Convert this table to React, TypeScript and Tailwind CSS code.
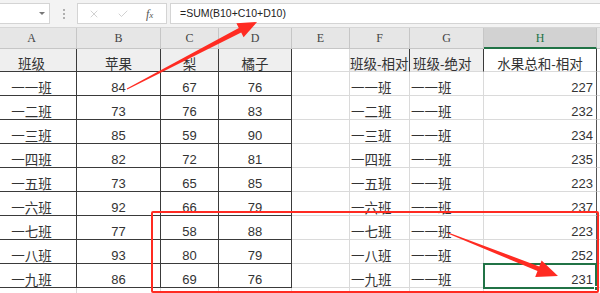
import React from "react";
import { X, Check } from "lucide-react";

const cols = "grid grid-cols-[77px_84px_58px_73px_58px_60px_74px_113px_3px]";
const cjk = "font-['Liberation_Sans','Noto_Sans_CJK_SC',sans-serif]";

const rows: [string, number, number, number, string, string, number][] = [
  ["一一班", 84, 67, 76, "一一班", "一一班", 227],
  ["一二班", 73, 76, 83, "一二班", "一一班", 232],
  ["一三班", 85, 59, 90, "一三班", "一一班", 234],
  ["一四班", 82, 72, 81, "一四班", "一一班", 235],
  ["一五班", 73, 65, 85, "一五班", "一一班", 223],
  ["一六班", 92, 66, 79, "一六班", "一一班", 237],
  ["一七班", 77, 58, 88, "一七班", "一一班", 223],
  ["一八班", 93, 80, 79, "一八班", "一一班", 252],
  ["一九班", 86, 69, 76, "一九班", "一一班", 231],
];

function FormulaBar() {
  return (
    <div className="flex items-center h-[28px] bg-[#f3f3f3] border-b border-[#d6d6d6]">
      <div className="relative w-[50px] h-[21px] bg-white border border-l-0 border-[#d4d4d4]">
        <div className="absolute right-[4px] top-[8px] w-0 h-0 border-l-[3px] border-r-[3px] border-t-[3px] border-l-transparent border-r-transparent border-t-[#777]" />
      </div>
      <div className="w-[27px] flex flex-col items-center gap-[2px]">
        <div className="w-[2px] h-[2px] bg-[#b0b0b0]" />
        <div className="w-[2px] h-[2px] bg-[#b0b0b0]" />
        <div className="w-[2px] h-[2px] bg-[#b0b0b0]" />
      </div>
      <div className="flex items-center w-[90px] h-[21px] bg-white border border-[#d4d4d4]">
        <X size={12} strokeWidth={1.4} className="ml-[10px] text-[#bdbdbd]" />
        <Check size={12} strokeWidth={1.4} className="ml-[17px] text-[#bdbdbd]" />
        <span className="ml-[17px] font-['Liberation_Serif',serif] italic text-[12px] text-[#555]">
          f<span className="text-[9px]">x</span>
        </span>
      </div>
      <div className="ml-[3px] flex-1 h-[21px] bg-white border border-r-0 border-[#d4d4d4] flex items-center pl-[9px] font-['Liberation_Sans',sans-serif] text-[10.5px] text-[#222]">
        =SUM(B10+C10+D10)
      </div>
    </div>
  );
}

function ColumnHeader() {
  const letters = ["A", "B", "C", "D", "E", "F", "G"];
  return (
    <div className={`${cols} h-[21px] bg-[#e6e6e6] font-['Liberation_Serif',serif] text-[12px] text-[#444]`}>
      {letters.map((l, i) => (
        <div
          key={l}
          className={`flex items-center justify-center border-r border-b border-[#c6c6c6] ${i === 0 ? "pr-[13px]" : ""}`}
        >
          {l}
        </div>
      ))}
      <div className="flex items-center justify-center bg-[#d2d2d2] border-r border-[#c6c6c6] border-b-2 border-b-[#217346] text-[#217346]">
        H
      </div>
      <div className="border-b border-[#c6c6c6]" />
    </div>
  );
}

function TitleRow() {
  return (
    <div className={`${cols} h-[23px] ${cjk} text-[13.5px] text-[#333] leading-none`}>
      <div className="flex items-end justify-center pr-[13px] bg-[#efefef] border-r border-b border-[#3a3a3a]">班级</div>
      <div className="flex items-end justify-center bg-[#efefef] border-r border-b border-[#3a3a3a]">苹果</div>
      <div className="flex items-end justify-center bg-[#efefef] border-r border-b border-[#3a3a3a]">梨</div>
      <div className="flex items-end justify-center bg-[#efefef] border-r border-b border-[#3a3a3a]">橘子</div>
      <div className="border-r border-b border-[#dadada]" />
      <div className="flex items-end whitespace-nowrap bg-[#efefef] border-r border-r-[#3a3a3a] border-b border-b-[#dadada]">班级-相对</div>
      <div className="flex items-end pl-[3px] whitespace-nowrap bg-[#efefef] border-r border-r-[#3a3a3a] border-b border-b-[#dadada]">班级-绝对</div>
      <div className="flex items-end justify-center whitespace-nowrap border-r border-r-[#3a3a3a] border-b border-b-[#dadada]">水果总和-相对</div>
      <div className="border-b border-[#dadada]" />
    </div>
  );
}

function DataRow({ r }: { r: [string, number, number, number, string, string, number] }) {
  return (
    <div className={`${cols} h-[24px] ${cjk} text-[#333] leading-none`}>
      <div className="flex items-end justify-center pr-[13px] text-[13.5px] border-r border-b border-[#3a3a3a]">{r[0]}</div>
      <div className="flex items-end justify-center pb-[1px] text-[13px] border-r border-b border-[#3a3a3a]">{r[1]}</div>
      <div className="flex items-end justify-center pb-[1px] text-[13px] border-r border-b border-[#3a3a3a]">{r[2]}</div>
      <div className="flex items-end justify-center pb-[1px] text-[13px] border-r border-b border-[#3a3a3a]">{r[3]}</div>
      <div className="border-r border-b border-[#dadada]" />
      <div className="flex items-end pl-[1px] text-[13.5px] border-r border-b border-[#dadada]">{r[4]}</div>
      <div className="flex items-end pl-[1px] text-[13.5px] border-r border-b border-[#dadada]">{r[5]}</div>
      <div className="flex items-end justify-end pr-[3px] pb-[1px] text-[13px] border-r border-r-[#555] border-b border-b-[#dadada]">{r[6]}</div>
      <div className="border-b border-[#dadada]" />
    </div>
  );
}

function EmptyRow() {
  return (
    <div className={`${cols} h-[24px]`}>
      <div className="border-r border-[#dadada]" />
      <div className="border-r border-[#dadada]" />
      <div className="border-r border-[#dadada]" />
      <div className="border-r border-[#dadada]" />
      <div className="border-r border-[#dadada]" />
      <div className="border-r border-[#dadada]" />
      <div className="border-r border-[#dadada]" />
      <div className="border-r border-[#555]" />
      <div />
    </div>
  );
}

function Annotations() {
  return (
    <>
      <div className="absolute left-[483px] top-[263px] w-[114px] h-[26px] border-2 border-[#217346]" />
      <div className="absolute left-[594px] top-[286px] w-[5px] h-[5px] bg-[#217346] border border-white" />
      <div className="absolute left-[151px] top-[211px] w-[448px] h-[82px] border-2 border-[#ff2b22] rounded-[2px]" />
      <svg className="absolute left-0 top-0 pointer-events-none" width="600" height="293" viewBox="0 0 600 293">
        <polygon
          fill="#ff2b22"
          points="127.2,89.4 241.2,32.5 243.6,37.3 257,22 236.4,23.3 238.8,28.1 126.8,88.6"
        />
        <polygon
          fill="#ff2b22"
          points="447.8,233.6 537.5,271.0 535.2,277.0 558,276 541.6,260.6 539.3,266.4 448.2,232.4"
        />
      </svg>
    </>
  );
}

export default function App() {
  return (
    <div className="relative w-[600px] h-[293px] overflow-hidden bg-white">
      <FormulaBar />
      <ColumnHeader />
      <TitleRow />
      {rows.map((r) => (
        <DataRow key={r[0]} r={r} />
      ))}
      <EmptyRow />
      <Annotations />
    </div>
  );
}
